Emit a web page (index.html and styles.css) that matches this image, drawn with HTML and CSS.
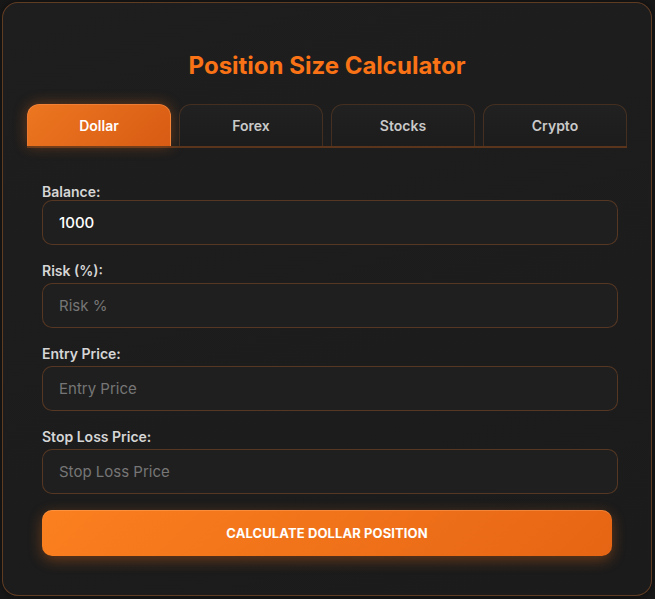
FILE: index.html
```html
<!DOCTYPE html>
<html lang="en">
<head>
<meta charset="utf-8">
<title>Position Size Calculator</title>
<link rel="stylesheet" href="styles.css">
</head>
<body>
<div class="card">
  <h1 class="title">Position Size Calculator</h1>
  <div class="tabs">
    <button class="tab active">Dollar</button>
    <button class="tab">Forex</button>
    <button class="tab">Stocks</button>
    <button class="tab">Crypto</button>
  </div>
  <form class="form">
    <div class="group first">
      <label class="label">Balance:</label>
      <input class="input" type="text" value="1000">
    </div>
    <div class="group">
      <label class="label">Risk (%):</label>
      <input class="input" type="text" placeholder="Risk %">
    </div>
    <div class="group">
      <label class="label">Entry Price:</label>
      <input class="input" type="text" placeholder="Entry Price">
    </div>
    <div class="group">
      <label class="label">Stop Loss Price:</label>
      <input class="input" type="text" placeholder="Stop Loss Price">
    </div>
    <button type="button" class="calc">CALCULATE DOLLAR POSITION</button>
  </form>
</div>
</body>
</html>
```

FILE: styles.css
```css
* { box-sizing: border-box; }
html, body { margin: 0; padding: 0; }
body {
  background: #181818;
  font-family: Inter, "Noto Sans", sans-serif;
  padding: 2px 3px 3px 2px;
}
.card {
  width: 650px;
  height: 594px;
  border: 1px solid rgba(180, 100, 45, 0.45);
  border-radius: 16px;
  background: linear-gradient(160deg, #1e1e1e 0%, #1b1b1b 100%);
  padding: 0 24px;
  box-shadow: 0 0 8px rgba(0,0,0,0.5);
}
.title {
  margin: 48px 0 24px;
  text-align: center;
  font-size: 24px;
  line-height: 29px;
  font-weight: 700;
  color: #f97316;
}
.tabs {
  display: flex;
  gap: 8px;
  border-bottom: 2px solid #5a351c;
}
.tab {
  flex: 1;
  height: 42px;
  border: 1px solid rgba(140, 80, 40, 0.35);
  border-bottom: none;
  border-radius: 12px 12px 0 0;
  background: linear-gradient(180deg, #212121 0%, #1c1c1c 100%);
  color: #c9c9c9;
  font-family: Inter, sans-serif;
  font-size: 14px;
  font-weight: 600;
  padding: 0;
}
.tab.active {
  background: linear-gradient(135deg, #ec7620 0%, #d85c14 100%);
  color: #ffffff;
  border-color: rgba(255, 150, 80, 0.5);
  box-shadow: 0 0 14px rgba(249, 115, 22, 0.35);
}
.form {
  padding: 35px 15px 0;
}
.group {
  margin-bottom: 17px;
}
.label {
  display: block;
  font-size: 14px;
  line-height: 17px;
  font-weight: 600;
  color: #d6d6d6;
  margin-bottom: 4px;
}
.group.first .label { margin-bottom: 0; }
.input {
  display: block;
  width: calc(100% + 6px);
  height: 45px;
  border: 1px solid rgba(150, 85, 40, 0.45);
  border-radius: 10px;
  background: #1f1f1f;
  color: #ffffff;
  font-family: Inter, sans-serif;
  font-size: 15px;
  font-weight: 500;
  padding: 0 16px;
  outline: none;
}
.input::placeholder {
  color: #767676;
  font-weight: 400;
}
.calc {
  display: block;
  width: 100%;
  height: 46px;
  margin-top: -1px;
  border: none;
  border-radius: 10px;
  background: linear-gradient(135deg, #fb801f 0%, #e66514 100%);
  color: #ffffff;
  font-family: Inter, sans-serif;
  font-size: 13px;
  font-weight: 700;
  letter-spacing: 0.1px;
  box-shadow: 0 4px 14px rgba(249, 115, 22, 0.35), inset 0 1px 0 rgba(255,180,120,0.35);
}
```
